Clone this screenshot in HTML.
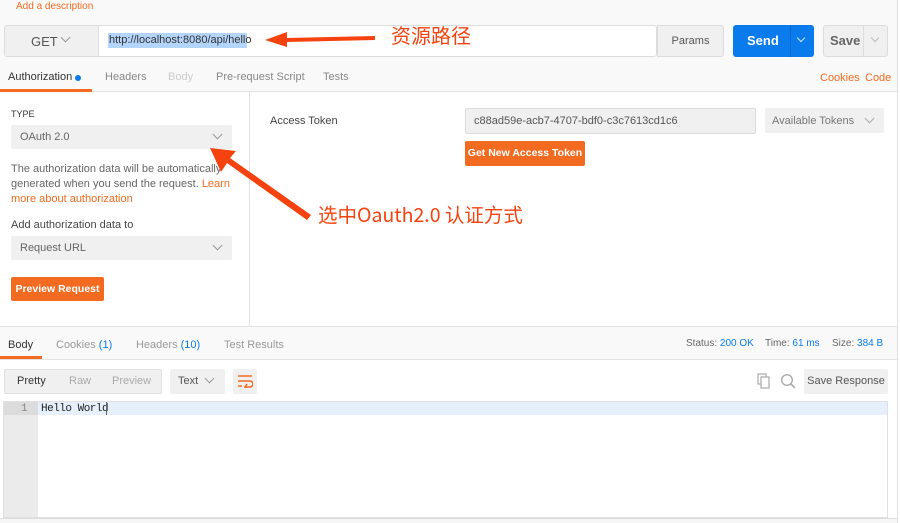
<!DOCTYPE html>
<html><head><meta charset="utf-8"><style>
*{box-sizing:border-box;margin:0;padding:0}
body{width:900px;height:523px;overflow:hidden;background:#fff;font-family:"Liberation Sans","Noto Sans CJK SC",sans-serif;font-size:11px;color:#505050;position:relative}
.a{position:absolute}
.chev{position:absolute;width:7px;height:7px;border-right:1.2px solid #999;border-bottom:1.2px solid #999;transform:rotate(45deg)}
</style></head><body>
<div class="a" style="left:0;top:0;width:897px;height:92px;background:#f9f9f9;border-bottom:1px solid #e2e2e2"></div>
<div class="a" style="left:897px;top:0;width:1px;height:523px;background:#e0e0e0"></div>
<div class="a" style="left:16px;top:1px;color:#f26b21;font-size:10px">Add a description</div>
<div class="a" style="left:4px;top:25px;width:653px;height:32px;border:1px solid #dcdcdc;border-radius:3px;background:#fff"></div>
<div class="a" style="left:5px;top:26px;width:94px;height:30px;background:#f0f0f0;border-right:1px solid #ddd"></div>
<div class="a" style="left:31px;top:34px;font-size:13px;color:#555">GET</div>
<div class="chev" style="left:62px;top:34px"></div>
<div class="a" style="left:108px;top:33px;height:15px;width:139px;background:#b4d5fb"></div>
<div class="a" style="left:109px;top:34px;font-size:11px;color:#333">http://localhost:8080/api/hello</div>
<div class="a" style="left:657px;top:25px;width:67px;height:32px;background:#f0f0f0;border:1px solid #dcdcdc;border-radius:0 3px 3px 0;text-align:center;line-height:30px;color:#555">Params</div>
<div class="a" style="left:733px;top:25px;width:81px;height:32px;background:#097bed;border-radius:3px"></div>
<div class="a" style="left:790px;top:25px;width:1px;height:32px;background:#0a68c8"></div>
<div class="a" style="left:747px;top:33px;color:#fff;font-size:13px;font-weight:bold">Send</div>
<div class="chev" style="left:798px;top:35px;border-color:#cfe4fb;width:6px;height:6px"></div>
<div class="a" style="left:823px;top:25px;width:65px;height:32px;background:#f0f0f0;border:1px solid #dcdcdc;border-radius:3px"></div>
<div class="a" style="left:863px;top:25px;width:1px;height:32px;background:#ddd"></div>
<div class="a" style="left:830px;top:33px;color:#666;font-size:13px;font-weight:bold">Save</div>
<div class="chev" style="left:872px;top:35px;width:6px;height:6px;border-color:#bbb"></div>
<div class="a" style="left:8px;top:71px;color:#333;font-size:11px">Authorization</div>
<div class="a" style="left:75px;top:75px;width:6px;height:6px;border-radius:50%;background:#097bed"></div>
<div class="a" style="left:0;top:89px;width:92px;height:3px;background:#f26b21"></div>
<div class="a" style="left:105px;top:71px;color:#888">Headers</div>
<div class="a" style="left:168px;top:71px;color:#ccc">Body</div>
<div class="a" style="left:216px;top:71px;color:#888">Pre-request Script</div>
<div class="a" style="left:323px;top:71px;color:#888">Tests</div>
<div class="a" style="left:820px;top:72px;color:#f26b21">Cookies</div>
<div class="a" style="left:865px;top:72px;color:#f26b21">Code</div>
<div class="a" style="left:249px;top:92px;width:1px;height:234px;background:#e2e2e2"></div>
<div class="a" style="left:11px;top:109px;font-size:9px;color:#333">TYPE</div>
<div class="a" style="left:11px;top:125px;width:221px;height:24px;background:#f0f0f0;border-radius:2px"></div>
<div class="a" style="left:20px;top:131px;color:#666">OAuth 2.0</div>
<div class="chev" style="left:214px;top:131px"></div>
<div class="a" style="left:11px;top:162px;width:220px;line-height:15px;color:#666">The authorization data will be automatically generated when you send the request. <span style="color:#f26b21">Learn more about authorization</span></div>
<div class="a" style="left:11px;top:219px;color:#444">Add authorization data to</div>
<div class="a" style="left:11px;top:236px;width:221px;height:24px;background:#f0f0f0;border-radius:2px"></div>
<div class="a" style="left:20px;top:242px;color:#666">Request URL</div>
<div class="chev" style="left:214px;top:242px"></div>
<div class="a" style="left:11px;top:277px;width:93px;height:24px;background:#f26b21;border-radius:2px;color:#fff;text-align:center;line-height:24px;font-weight:bold;font-size:10.5px">Preview Request</div>
<div class="a" style="left:270px;top:115px;color:#444">Access Token</div>
<div class="a" style="left:465px;top:108px;width:291px;height:26px;background:#f0f0f0;border:1px solid #ddd;border-radius:2px"></div>
<div class="a" style="left:474px;top:115px;color:#555">c88ad59e-acb7-4707-bdf0-c3c7613cd1c6</div>
<div class="a" style="left:765px;top:108px;width:119px;height:25px;background:#f0f0f0;border-radius:2px"></div>
<div class="a" style="left:772px;top:115px;color:#777">Available Tokens</div>
<div class="chev" style="left:866px;top:115px;border-color:#aaa"></div>
<div class="a" style="left:465px;top:141px;width:120px;height:25px;background:#f26b21;border-radius:2px;color:#fff;text-align:center;line-height:25px;font-weight:bold;font-size:10.5px">Get New Access Token</div>
<div class="a" style="left:0;top:326px;width:897px;height:34px;background:#f9f9f9;border-top:1px solid #e2e2e2;border-bottom:1px solid #e2e2e2"></div>
<div class="a" style="left:8px;top:339px;color:#333">Body</div>
<div class="a" style="left:0;top:356px;width:42px;height:3px;background:#f26b21"></div>
<div class="a" style="left:56px;top:339px;color:#999">Cookies <span style="color:#097bed">(1)</span></div>
<div class="a" style="left:136px;top:339px;color:#999">Headers <span style="color:#097bed">(10)</span></div>
<div class="a" style="left:224px;top:339px;color:#999">Test Results</div>
<div class="a" style="left:686px;top:338px;font-size:10px;color:#666">Status: <span style="color:#097bed">200 OK</span></div>
<div class="a" style="left:765px;top:338px;font-size:10px;color:#666">Time: <span style="color:#097bed">61 ms</span></div>
<div class="a" style="left:832px;top:338px;font-size:10px;color:#666">Size: <span style="color:#097bed">384 B</span></div>
<div class="a" style="left:4px;top:369px;width:158px;height:25px;background:#f0f0f0;border:1px solid #e0e0e0;border-radius:2px"></div>
<div class="a" style="left:17px;top:375px;color:#333">Pretty</div>
<div class="a" style="left:69px;top:375px;color:#aaa">Raw</div>
<div class="a" style="left:112px;top:375px;color:#aaa">Preview</div>
<div class="a" style="left:170px;top:369px;width:55px;height:25px;background:#f0f0f0;border-radius:2px"></div>
<div class="a" style="left:178px;top:375px;color:#555">Text</div>
<div class="chev" style="left:206px;top:375px"></div>
<div class="a" style="left:233px;top:369px;width:24px;height:25px;background:#f0f0f0;border-radius:2px"></div>
<svg class="a" style="left:237px;top:374px" width="16" height="14"><path d="M1 2H15M1 7H13a3 3 0 0 1 0 6H8M1 12H5M10 10L8 13 10 15" stroke="#f26b21" stroke-width="1.6" fill="none"/></svg>
<svg class="a" style="left:757px;top:373px" width="14" height="16"><rect x="1" y="1" width="8" height="10" fill="none" stroke="#aaa" stroke-width="1.2"/><rect x="4" y="4" width="8" height="11" fill="#fff" stroke="#aaa" stroke-width="1.2"/></svg>
<svg class="a" style="left:780px;top:373px" width="16" height="16"><circle cx="7" cy="7" r="5.3" fill="none" stroke="#aaa" stroke-width="1.4"/><path d="M11 11L15 15" stroke="#aaa" stroke-width="1.6"/></svg>
<div class="a" style="left:804px;top:369px;width:84px;height:25px;background:#f0f0f0;border-radius:2px;text-align:center;line-height:25px;color:#555">Save Response</div>
<div class="a" style="left:3px;top:401px;width:885px;height:117px;border:1px solid #e0e0e0;background:#fff"></div>
<div class="a" style="left:4px;top:402px;width:34px;height:115px;background:#ebebeb"></div>
<div class="a" style="left:4px;top:402px;width:34px;height:13px;background:#dcdcdc"></div>
<div class="a" style="left:38px;top:402px;width:849px;height:13px;background:#e5f0fc"></div>
<div class="a" style="left:21px;top:403px;font-family:'Liberation Mono',monospace;font-size:11px;color:#888">1</div>
<div class="a" style="left:41px;top:403px;font-family:'Liberation Mono',monospace;font-size:11px;color:#222;letter-spacing:-0.5px">Hello World</div>
<div class="a" style="left:106px;top:402px;width:1px;height:13px;background:#666"></div>
<div class="a" style="left:0;top:518px;width:897px;height:5px;background:#f6f6f6;border-top:1px solid #ddd"></div>
<svg class="a" style="left:0;top:0" width="900" height="523">
<path d="M375 36L287 38L287 32L265 40L287 47L287 42L375 40Z" fill="#f5420f"/>
<path d="M311 215L230 158L236 151L210 148L221 172L227 163L307 220Z" fill="#f5420f"/>
</svg>
<div class="a" style="left:391px;top:20px;font-size:20px;color:#f5420f;font-family:'Noto Sans CJK SC',sans-serif">资源路径</div>
<div class="a" style="left:318px;top:199px;font-size:19.5px;color:#f5420f;font-family:'Noto Sans CJK SC',sans-serif">选中Oauth2.0 认证方式</div>
</body></html>
